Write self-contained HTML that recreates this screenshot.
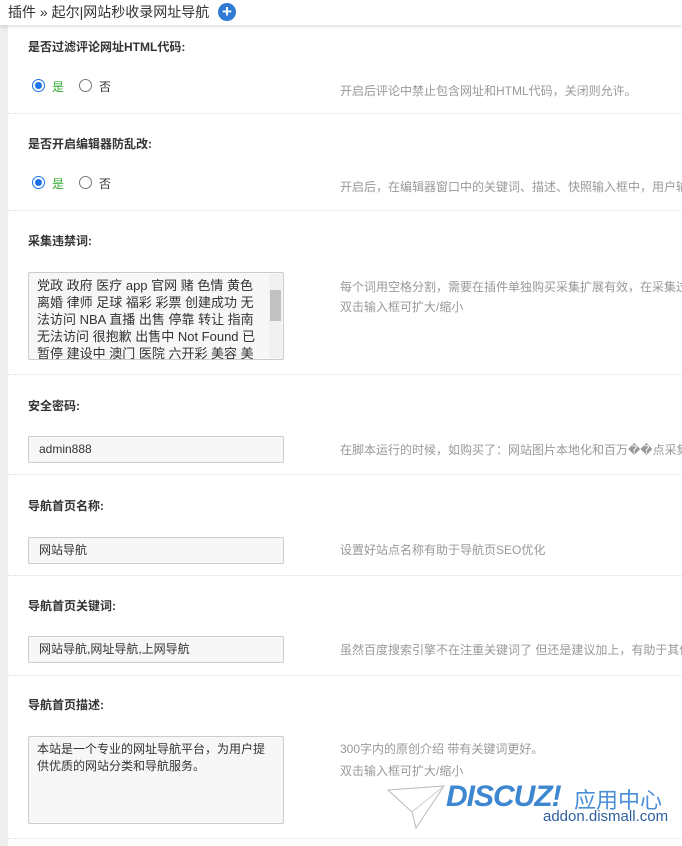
<!DOCTYPE html>
<html><head><meta charset="utf-8"><style>
body{margin:0;width:682px;height:846px;overflow:hidden;background:#fff;font-family:"Liberation Sans","Noto Sans CJK SC",sans-serif;font-size:12px;color:#333;position:relative}
.hd{position:absolute;left:0;top:0;width:682px;height:25px;background:#fff;box-shadow:0 2px 3px rgba(0,0,0,.12);z-index:2;font-size:14px;color:#333}
.hd span{position:absolute;left:8px;top:2px}
.plus{position:absolute;left:218px;top:3px;width:18px;height:18px;border-radius:50%;background:#2f7bd4;color:#fff;font-weight:bold;font-size:17px;line-height:17px;text-align:center}
.gut{position:absolute;left:0;top:25px;width:8px;height:821px;background:#eee}
.a{position:absolute;white-space:nowrap}
.t{font-weight:bold;left:28px;color:#333}
.d{left:340px;color:#999}
.sep{position:absolute;left:8px;width:674px;border-top:1px dotted #ddd}
.in{position:absolute;left:28px;width:244px;height:25px;border:1px solid #ccc;border-radius:2px;background:#f7f7f7;padding-left:10px;line-height:25px}
.ta{position:absolute;left:28px;border:1px solid #ccc;border-radius:2px;background:#f7f7f7;padding:4px 8px;line-height:16.5px;overflow:hidden;white-space:normal}
.r{position:absolute;width:11px;height:11px;border-radius:50%;border:1px solid #777;background:#fff}
.r.on{border-color:#1a73e8}
.r.on:after{content:"";position:absolute;left:2px;top:2px;width:7px;height:7px;border-radius:50%;background:#1a73e8}
</style></head><body>
<div class="hd"><span>插件 » 起尔|网站秒收录网址导航</span><div class="plus">+</div></div>
<div class="gut"></div>

<div class="a t" style="top:38px">是否过滤评论网址HTML代码:</div>
<div class="r on" style="left:32px;top:79px"></div><div class="a" style="left:52px;top:78px;color:#3a3">是</div>
<div class="r" style="left:79px;top:79px"></div><div class="a" style="left:99px;top:78px">否</div>
<div class="a d" style="top:82px">开启后评论中禁止包含网址和HTML代码，关闭则允许。</div>
<div class="sep" style="top:113px"></div>

<div class="a t" style="top:135px">是否开启编辑器防乱改:</div>
<div class="r on" style="left:32px;top:176px"></div><div class="a" style="left:52px;top:175px;color:#3a3">是</div>
<div class="r" style="left:79px;top:176px"></div><div class="a" style="left:99px;top:175px">否</div>
<div class="a d" style="top:178px">开启后，在编辑器窗口中的关键词、描述、快照输入框中，用户输入</div>
<div class="sep" style="top:210px"></div>

<div class="a t" style="top:232px">采集违禁词:</div>
<div class="ta" style="top:272px;width:238px;height:78px;font-size:13px;line-height:17px"><div style="width:228px">党政 政府 医疗 app 官网 赌 色情 黄色 离婚 律师 足球 福彩 彩票 创建成功 无法访问 NBA 直播 出售 停靠 转让 指南 无法访问 很抱歉 出售中 Not Found 已暂停 建设中 澳门 医院 六开彩 美容 美体 医药 药 维护 退款 到期 过期 404 错误 到</div>
<div style="position:absolute;right:1px;top:1px;width:13px;height:84px;background:#f1f1f1"><div style="position:absolute;left:1px;top:16px;width:11px;height:31px;background:#c1c1c1"></div></div></div>
<div class="a d" style="top:278px">每个词用空格分割，需要在插件单独购买采集扩展有效，在采集过</div>
<div class="a d" style="top:298px">双击输入框可扩大/缩小</div>
<div class="sep" style="top:374px"></div>

<div class="a t" style="top:397px">安全密码:</div>
<div class="in" style="top:436px">admin888</div>
<div class="a d" style="top:441px">在脚本运行的时候，如购买了：网站图片本地化和百万��点采集</div>
<div class="sep" style="top:474px"></div>

<div class="a t" style="top:497px">导航首页名称:</div>
<div class="in" style="top:537px">网站导航</div>
<div class="a d" style="top:541px">设置好站点名称有助于导航页SEO优化</div>
<div class="sep" style="top:575px"></div>

<div class="a t" style="top:597px">导航首页关键词:</div>
<div class="in" style="top:636px">网站导航,网址导航,上网导航</div>
<div class="a d" style="top:641px">虽然百度搜索引擎不在注重关键词了 但还是建议加上，有助于其他</div>
<div class="sep" style="top:675px"></div>

<div class="a t" style="top:696px">导航首页描述:</div>
<div class="ta" style="top:736px;width:238px;height:78px">本站是一个专业的网址导航平台，为用户提供优质的网站分类和导航服务。</div>
<div class="a d" style="top:740px">300字内的原创介绍 带有关键词更好。</div>
<div class="a d" style="top:762px">双击输入框可扩大/缩小</div>
<div class="sep" style="top:838px"></div>

<svg class="a" style="left:386px;top:782px" width="60" height="50"><path d="M2 8 L58 4 L30 46 L26 30 Z" fill="#fff" stroke="#bbb"/><path d="M26 30 L58 4" stroke="#ccc"/></svg>
<div class="a" style="left:446px;top:780px;font-size:30px;font-weight:bold;font-style:italic;color:#3d86d0;letter-spacing:-1px">DISCUZ!</div>
<div class="a" style="left:574px;top:783px;font-size:22px;color:#4a8fd6">应用中心</div>
<div class="a" style="left:543px;top:808px;font-size:15px;color:#2d5f9c">addon.dismall.com</div>
</body></html>
